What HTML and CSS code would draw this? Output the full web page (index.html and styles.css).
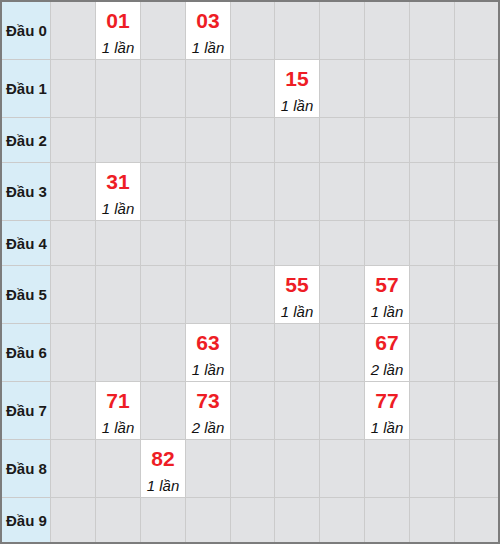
FILE: index.html
```html
<!DOCTYPE html>
<html>
<head>
    <title>Thống kê đầu đuôi</title>
    <link rel="stylesheet" href="styles.css">
</head>
<body>
    <div class="board" id="board"></div>

    <script>
        const hits = {
            '01': 1, '03': 1, '15': 1, '31': 1, '55': 1, '57': 1,
            '63': 1, '67': 2, '71': 1, '73': 2, '77': 1, '82': 1
        };

        const board = document.getElementById('board');
        for (let head = 0; head < 10; head++) {
            const label = document.createElement('div');
            label.className = 'cell label';
            label.textContent = 'Đầu ' + head;
            board.appendChild(label);

            for (let tail = 0; tail < 10; tail++) {
                const key = '' + head + tail;
                const cell = document.createElement('div');
                cell.className = 'cell';
                if (hits[key]) {
                    cell.classList.add('hit');
                    cell.innerHTML = '<span class="num">' + key + '</span>' +
                        '<span class="count">' + hits[key] + ' lần</span>';
                }
                board.appendChild(cell);
            }
        }
    </script>
</body>
</html>
```

FILE: styles.css
```css
body {
    margin: 0;
    font-family: "Liberation Sans", Arial, sans-serif;
    background: #fff;
}

.board {
    width: 500px;
    height: 544px;
    box-sizing: border-box;
    border: 2px solid #7c7c7c;
    background: #cbcbcb;
    display: grid;
    grid-template-columns: 48px 44px 44px 44px 44px 43px 44px 44px 44px 44px 43px;
    gap: 1px;
}

.cell {
    min-height: 44px;
    background: #e1e2e4;
}

.label {
    display: flex;
    align-items: center;
    padding-left: 4px;
    background: #d8edf7;
    font-size: 15px;
    font-weight: bold;
    color: #1a1a1a;
}

.hit {
    display: flex;
    flex-direction: column;
    align-items: center;
    padding: 7px 0 1px;
    background: #fff;
}

.num {
    line-height: 24px;
    font-size: 21px;
    font-weight: bold;
    color: #ee1d25;
}

.count {
    margin-top: 5px;
    line-height: 20px;
    font-size: 15px;
    font-style: italic;
    color: #111;
}
```
